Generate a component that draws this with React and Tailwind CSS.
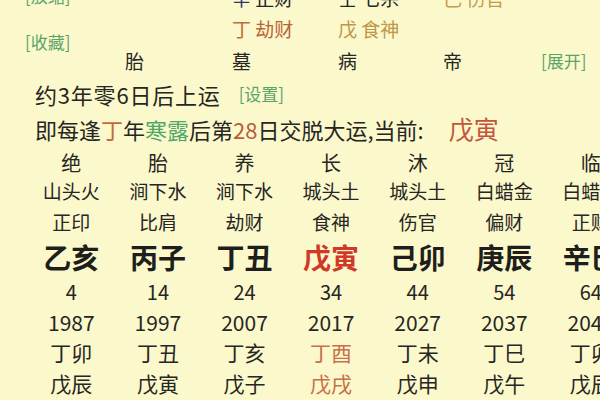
import React from "react";

const cols = [
  { a: "绝", b: "山头火", c: "正印", d: "乙亥", e: "4", f: "1987", g: "丁卯", h: "戊辰" },
  { a: "胎", b: "涧下水", c: "比肩", d: "丙子", e: "14", f: "1997", g: "丁丑", h: "戊寅" },
  { a: "养", b: "涧下水", c: "劫财", d: "丁丑", e: "24", f: "2007", g: "丁亥", h: "戊子" },
  { a: "长", b: "城头土", c: "食神", d: "戊寅", e: "34", f: "2017", g: "丁酉", h: "戊戌", cur: true },
  { a: "沐", b: "城头土", c: "伤官", d: "己卯", e: "44", f: "2027", g: "丁未", h: "戊申" },
  { a: "冠", b: "白蜡金", c: "偏财", d: "庚辰", e: "54", f: "2037", g: "丁巳", h: "戊午" },
  { a: "临", b: "白蜡金", c: "正财", d: "辛巳", e: "64", f: "2047", g: "丁卯", h: "戊辰" },
];

export default function App() {
  return (
    <div
      className="w-[600px] h-[400px] overflow-hidden bg-[#fbf8cb] text-[#262624]"
      style={{ fontFamily: '"Noto Sans CJK SC", "Noto Sans", sans-serif' }}
    >
      {/* top area */}
      <div className="flex mt-[-18px]">
        <div className="w-[125px] shrink-0 pl-[25px] flex flex-col text-[17px] text-[#5aa46a]">
          <div className="h-[32px] leading-[28px]">[放缩]</div>
          <div className="h-[30px] leading-[56px]">[收藏]</div>
        </div>
        <div className="grid grid-cols-[107px_106px_105px_98px_1fr] text-[19px]">
          <div className="h-[32px] leading-[32px]"></div>
          <div className="h-[32px] leading-[32px]"><span className="text-[#2b3670]">辛</span> 正财</div>
          <div className="h-[32px] leading-[32px]">壬 七杀</div>
          <div className="h-[32px] leading-[32px] text-[#c49a4c]">己 伤官</div>
          <div></div>

          <div className="h-[30px] leading-[30px]"></div>
          <div className="h-[30px] leading-[30px] text-[#b8643a]"><span className="text-[#c46a3c]">丁</span> 劫财</div>
          <div className="h-[30px] leading-[30px] text-[#c0964a]">戊 食神</div>
          <div></div>
          <div></div>

          <div className="h-[33px] leading-[33px]">胎</div>
          <div className="h-[33px] leading-[33px]">墓</div>
          <div className="h-[33px] leading-[33px]">病</div>
          <div className="h-[33px] leading-[33px]">帝</div>
          <div className="h-[33px] leading-[33px] text-[17px] text-[#5aa46a]">[展开]</div>
        </div>
      </div>

      {/* info lines */}
      <div className="pl-[35px] text-[22px]">
        <div className="h-[34px] leading-[34px] flex items-center whitespace-nowrap">
          <span className="tracking-[0.8px]">约3年零6日后上运</span>
          <span className="ml-[18px] text-[17px] text-[#5aa46a]">[设置]</span>
        </div>
        <div className="h-[34px] leading-[34px] whitespace-nowrap">
          即每逢<span className="text-[#c46a3c]">丁</span>年
          <span className="text-[#4fa86a]">寒露</span>后第
          <span className="text-[#b5603a]">28</span>日交脱大运,当前:{" "}
          <span className="ml-[20px] text-[25px] text-[#c4553c]">戊寅</span>
        </div>
      </div>

      {/* grid */}
      <div className="mt-[3px] pl-[28px] flex whitespace-nowrap">
        {cols.map((c, i) => (
          <div key={i} className="w-[86.6px] shrink-0 flex flex-col items-center">
            <div className="h-[29px] leading-[29px] text-[20px]">{c.a}</div>
            <div className="h-[28px] leading-[28px] text-[19px]">{c.b}</div>
            <div className="h-[33px] leading-[33px] text-[19px]">{c.c}</div>
            <div
              className={
                "h-[38px] leading-[38px] text-[28px] font-bold " +
                (c.cur ? "text-[#d0382a]" : "text-[#1e1e1c]")
              }
            >
              {c.d}
            </div>
            <div className="h-[32px] leading-[32px] text-[20px]">{c.e}</div>
            <div className="h-[29px] leading-[29px] text-[21px]">{c.f}</div>
            <div className={"h-[31px] leading-[31px] text-[21px] " + (c.cur ? "text-[#c8704a]" : "")}>{c.g}</div>
            <div className={"h-[30px] leading-[30px] text-[21px] " + (c.cur ? "text-[#c8704a]" : "")}>{c.h}</div>
          </div>
        ))}
      </div>
    </div>
  );
}
